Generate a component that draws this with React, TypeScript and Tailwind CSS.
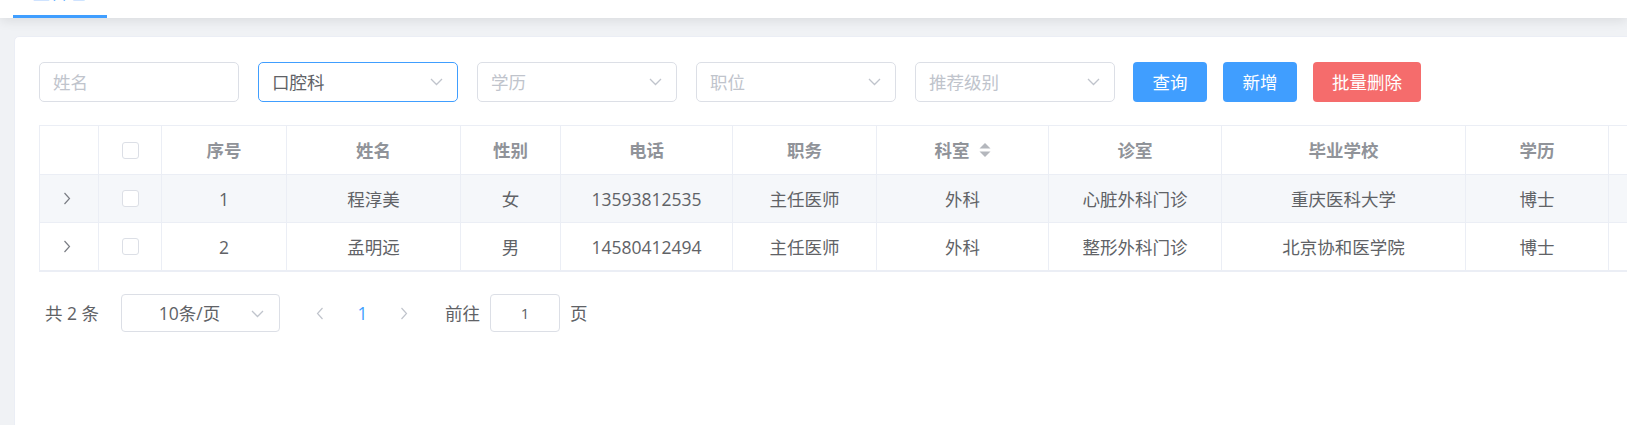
import React from 'react';

const grid =
  'grid grid-cols-[59px_63px_125px_174px_100px_172px_144px_172px_173px_244px_143px_220px]';

const rows = [
  { id: 1, name: '程淳美', sex: '女', phone: '13593812535', duty: '主任医师', dept: '外科', clinic: '心脏外科门诊', school: '重庆医科大学', edu: '博士' },
  { id: 2, name: '孟明远', sex: '男', phone: '14580412494', duty: '主任医师', dept: '外科', clinic: '整形外科门诊', school: '北京协和医学院', edu: '博士' },
];

const Chevron: React.FC<{ dir: 'down' | 'right' | 'left'; color?: string; className?: string }> = ({ dir, color = '#c0c4cc', className }) => {
  if (dir === 'down') {
    return (
      <svg className={className} width="13" height="8" viewBox="0 0 13 8">
        <path d="M1 1 L6.5 6.5 L12 1" fill="none" stroke={color} strokeWidth="1.3" />
      </svg>
    );
  }
  return (
    <svg className={className} width="8" height="13" viewBox="0 0 8 13">
      <path d={dir === 'right' ? 'M1.5 1 L6.5 6.5 L1.5 12' : 'M6.5 1 L1.5 6.5 L6.5 12'} fill="none" stroke={color} strokeWidth="1.2" />
    </svg>
  );
};

const Select: React.FC<{ value?: string; placeholder: string; focused?: boolean; arrow?: boolean }> = ({ value, placeholder, focused, arrow = true }) => (
  <div
    className={`w-[200px] h-[40px] mr-[19px] shrink-0 rounded-[5px] border flex items-center justify-between pl-[13px] pr-[14px] bg-white ${
      focused ? 'border-[#409eff]' : 'border-[#dcdfe6]'
    }`}
  >
    <span className={value ? 'text-[#606266]' : 'text-[#c0c4cc]'}>{value || placeholder}</span>
    {arrow && <Chevron dir="down" />}
  </div>
);

const Checkbox = () => <div className="w-[17px] h-[17px] rounded-[3px] border border-[#dcdfe6] bg-white" />;

const cell = 'border-r border-b border-[#ebeef5] flex items-center justify-center';

export default function App() {
  return (
    <div className="w-[1627px] h-[425px] overflow-hidden bg-[#f0f2f5] font-['Open_Sans','Noto_Sans_CJK_SC',sans-serif] text-[17.5px] leading-[24px]">
      {/* top tab bar */}
      <div className="h-[18px] bg-white shadow-[0_3px_12px_rgba(0,0,0,0.09)] overflow-hidden relative z-10">
        <div className="ml-[13px] w-[94px] h-[18px] border-b-[3px] border-[#409eff] flex flex-col">
          <div className="-mt-[19px] pl-[2px] text-[#409eff] leading-[22px]">医生管理</div>
        </div>
      </div>

      {/* card */}
      <div className="ml-[14px] mt-[18px] w-[1660px] h-[400px] bg-white border border-[#ebeef5] rounded-[5px] pl-[24px] pt-[25px]">
        {/* filters */}
        <div className="flex items-center h-[40px]">
          <Select placeholder="姓名" arrow={false} />
          <Select placeholder="口腔科" value="口腔科" focused />
          <Select placeholder="学历" />
          <Select placeholder="职位" />
          <Select placeholder="推荐级别" />
          <button className="w-[74px] h-[40px] rounded-[4px] bg-[#409eff] text-white -ml-[1px] mr-[16px]">查询</button>
          <button className="w-[74px] h-[40px] rounded-[4px] bg-[#409eff] text-white mr-[16px]">新增</button>
          <button className="w-[108px] h-[40px] rounded-[4px] bg-[#f56c6c] text-white">批量删除</button>
        </div>

        {/* table */}
        <div className="mt-[23px] border-t border-l border-b border-[#ebeef5] w-fit">
          <div className={`${grid} h-[49px] text-[#909399] font-bold`}>
            <div className={cell} />
            <div className={cell}><Checkbox /></div>
            <div className={cell}>序号</div>
            <div className={cell}>姓名</div>
            <div className={cell}>性别</div>
            <div className={cell}>电话</div>
            <div className={cell}>职务</div>
            <div className={cell}>
              <span>科室</span>
              <svg className="ml-[9px]" width="12" height="16" viewBox="0 0 12 16">
                <path d="M6 1 L11.5 6.5 L0.5 6.5 Z" fill="#b4b7bd" />
                <path d="M6 15 L11.5 9.5 L0.5 9.5 Z" fill="#b4b7bd" />
              </svg>
            </div>
            <div className={cell}>诊室</div>
            <div className={cell}>毕业学校</div>
            <div className={cell}>学历</div>
            <div className={cell} />
          </div>
          {rows.map((r, i) => (
            <div key={r.id} className={`${grid} h-[48px] text-[#606266] ${i === 0 ? 'bg-[#f5f7fa]' : 'bg-white'}`}>
              <div className={cell}><Chevron dir="right" color="#7a7d84" className="-ml-[4px]" /></div>
              <div className={cell}><Checkbox /></div>
              <div className={cell}>{r.id}</div>
              <div className={cell}>{r.name}</div>
              <div className={cell}>{r.sex}</div>
              <div className={cell}>{r.phone}</div>
              <div className={cell}>{r.duty}</div>
              <div className={cell}>{r.dept}</div>
              <div className={cell}>{r.clinic}</div>
              <div className={cell}>{r.school}</div>
              <div className={cell}>{r.edu}</div>
              <div className={cell} />
            </div>
          ))}
        </div>

        {/* pagination */}
        <div className="mt-[22px] pl-[6px] flex items-center h-[38px] text-[#606266]">
          <span className="w-[57px] whitespace-pre">共 2 条</span>
          <div className="ml-[19px] w-[159px] h-[38px] rounded-[4px] border border-[#dcdfe6] flex items-center relative">
            <span className="flex-1 text-center pr-[22px]">10条/页</span>
            <Chevron dir="down" className="absolute right-[15px] top-[15px]" />
          </div>
          <div className="ml-[22px] w-[36px] flex justify-center"><Chevron dir="left" /></div>
          <div className="w-[49px] text-center text-[#409eff]">1</div>
          <div className="w-[34px] flex justify-center"><Chevron dir="right" /></div>
          <span className="ml-[24px]">前往</span>
          <div className="ml-[10px] w-[70px] h-[38px] rounded-[4px] border border-[#dcdfe6] flex items-center justify-center text-[15px]">1</div>
          <span className="ml-[10px]">页</span>
        </div>
      </div>
    </div>
  );
}
